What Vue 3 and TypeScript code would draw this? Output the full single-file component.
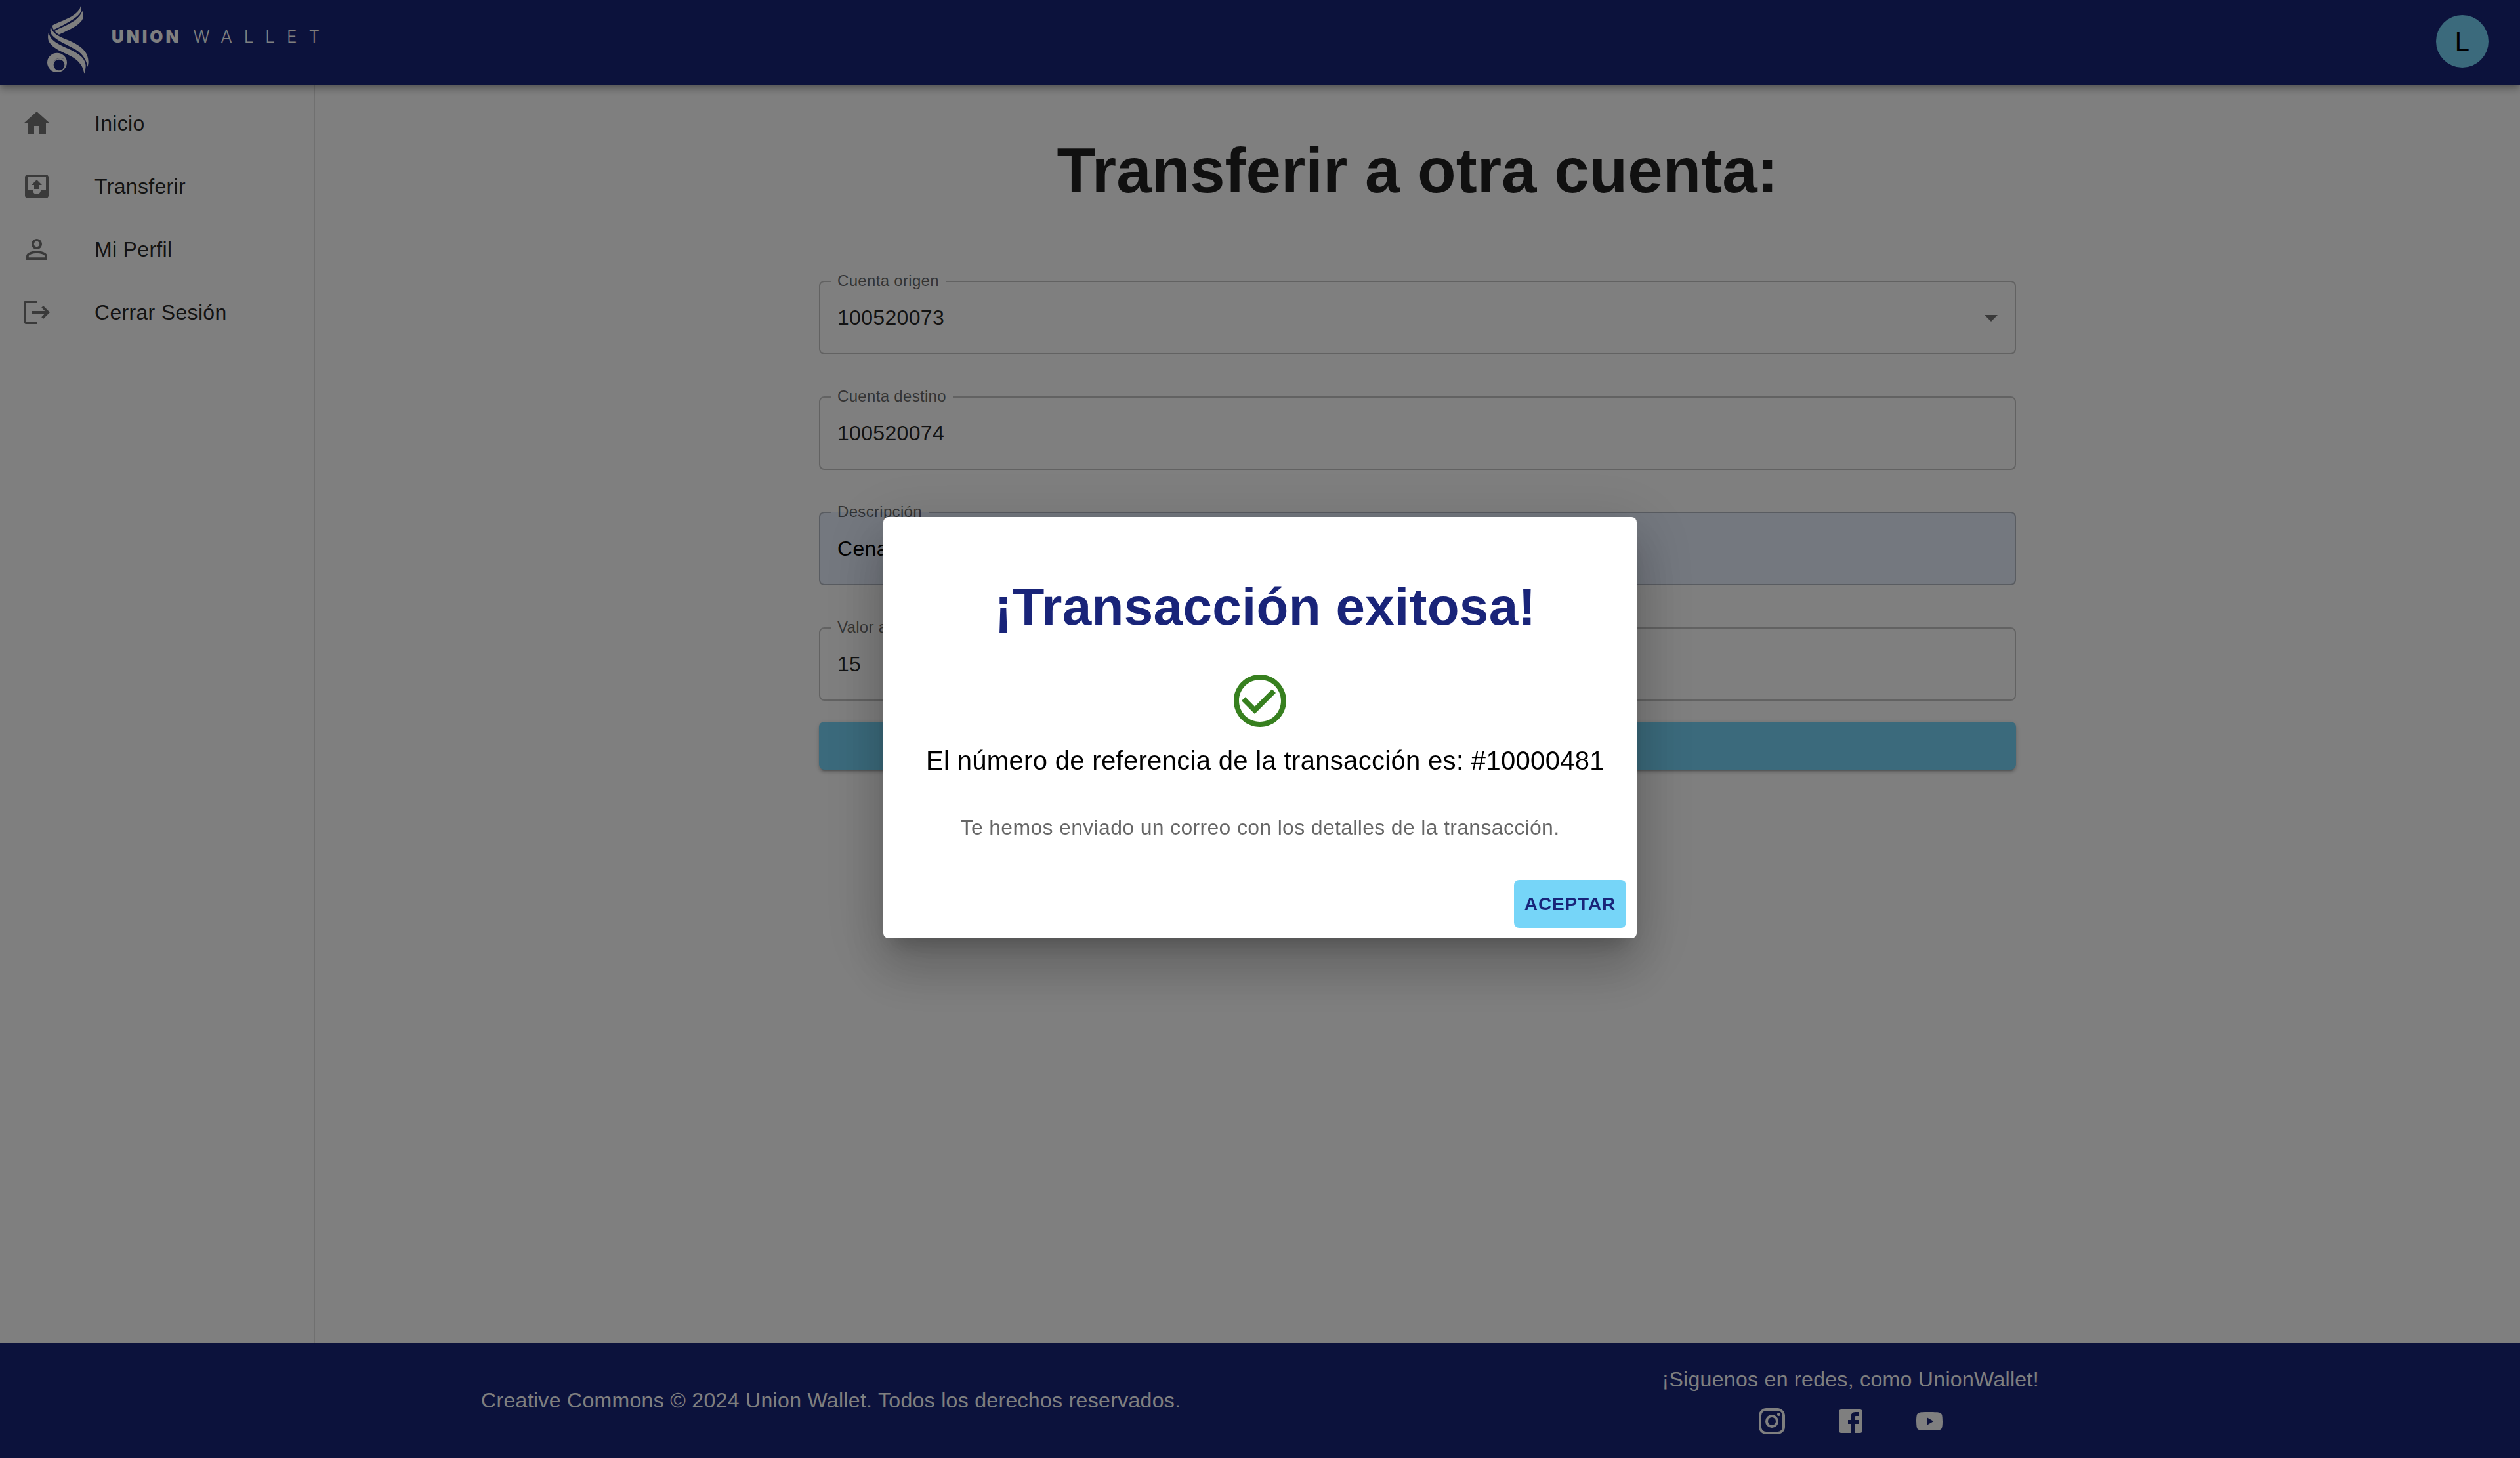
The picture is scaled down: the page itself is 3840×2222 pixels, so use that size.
<script setup lang="ts">
import { ref } from 'vue'

interface NavItem {
  label: string
  path: string
}

interface TextField {
  id: string
  label: string
  value: string
  filled: boolean
}

const navItems: NavItem[] = [
  { label: 'Inicio', path: 'M10 20v-6h4v6h5v-8h3L12 3 2 12h3v8z' },
  {
    label: 'Transferir',
    path: 'M19 3H5c-1.1 0-2 .9-2 2v14c0 1.1.9 2 2 2h14c1.1 0 2-.9 2-2V5c0-1.1-.9-2-2-2zm0 12h-4c0 1.66-1.35 3-3 3s-3-1.34-3-3H5V5h14v10zM8 11h2v3h4v-3h2l-4-4z',
  },
  {
    label: 'Mi Perfil',
    path: 'M12 5.9c1.16 0 2.1.94 2.1 2.1s-.94 2.1-2.1 2.1S9.9 9.16 9.9 8s.94-2.1 2.1-2.1m0 9c2.97 0 6.1 1.46 6.1 2.1v1.1H5.9V17c0-.64 3.13-2.1 6.1-2.1M12 4C9.79 4 8 5.79 8 8s1.79 4 4 4 4-1.79 4-4-1.79-4-4-4zm0 9c-2.67 0-8 1.34-8 4v3h16v-3c0-2.66-5.33-4-8-4z',
  },
  {
    label: 'Cerrar Sesión',
    path: 'M12 5V3H4c-1.1 0-2 .9-2 2v14c0 1.1.9 2 2 2h8v-2H4V5zM17 7l-1.41 1.41L18.17 11H8v2h10.17l-2.58 2.58L17 17l5-5z',
  },
]

const socialLinks: NavItem[] = [
  {
    label: 'Instagram',
    path: 'M7.8 2h8.4C19.4 2 22 4.6 22 7.8v8.4a5.8 5.8 0 0 1-5.8 5.8H7.8C4.6 22 2 19.4 2 16.2V7.8A5.8 5.8 0 0 1 7.8 2m-.2 2A3.6 3.6 0 0 0 4 7.6v8.8C4 18.39 5.61 20 7.6 20h8.8a3.6 3.6 0 0 0 3.6-3.6V7.6C20 5.61 18.39 4 16.4 4H7.6m9.65 1.5a1.25 1.25 0 1 1 0 2.5 1.25 1.25 0 0 1 0-2.5M12 7a5 5 0 1 1 0 10 5 5 0 0 1 0-10m0 2a3 3 0 1 0 0 6 3 3 0 0 0 0-6z',
  },
  {
    label: 'Facebook',
    path: 'M5 3h14a2 2 0 0 1 2 2v14a2 2 0 0 1-2 2h-4v-7h3v-3h-3V9a1 1 0 0 1 1-1h2V5h-2.5A3.5 3.5 0 0 0 12 8.5V11h-2v3h2v7H5a2 2 0 0 1-2-2V5a2 2 0 0 1 2-2z',
  },
  {
    label: 'YouTube',
    path: 'M10 15l5.19-3L10 9v6m11.56-7.83c.13.47.22 1.1.28 1.9.07.8.1 1.49.1 2.09L22 12c0 2.19-.16 3.8-.44 4.83-.25.9-.83 1.48-1.73 1.73-.47.13-1.33.22-2.65.28-1.3.07-2.49.1-3.59.1L12 19c-4.19 0-6.8-.16-7.83-.44-.9-.25-1.48-.83-1.73-1.73-.13-.47-.22-1.1-.28-1.9-.07-.8-.1-1.49-.1-2.09L2 12c0-2.19.16-3.8.44-4.83.25-.9.83-1.48 1.73-1.73.47-.13 1.33-.22 2.65-.28 1.3-.07 2.49-.1 3.59-.1L12 5c4.19 0 6.8.16 7.83.44.9.25 1.48.83 1.73 1.73z',
  },
]

const accounts = ['100520073']
const origin = ref(accounts[0])
const fields = ref<TextField[]>([
  { id: 'destino', label: 'Cuenta destino', value: '100520074', filled: false },
  { id: 'descripcion', label: 'Descripción', value: 'Cena', filled: true },
  { id: 'valor', label: 'Valor a transferir', value: '15', filled: false },
])
const dialogOpen = ref(true)
</script>

<template>
  <div class="page">
    <header class="topbar">
      <a class="brand" href="#">
        <svg class="brand-mark" viewBox="0 0 228 342" aria-hidden="true">
          <path d="M42 104C78 84 164 62 170 16c6 14 4 26-4 34C146 76 100 98 48 124c-5-6-6-12-6-20z" />
          <path d="M52 129C98 104 160 88 178 38c6 14 6 24 3 34-11 30-61 52-109 74-8-5-16-9-20-17z" />
          <path d="M34 110c4 16 14 29 32 40 38 24 140 42 140 120 0 10-2 18-4 24-4-32-22-58-52-78-34-22-90-40-112-70-8-12-7-24-4-36z" />
          <path d="M25 136c3 24 19 40 45 54 42 24 122 44 124 98 0 14-4 28-7 38-3-34-27-64-63-82-40-20-90-38-101-72-3-14-2-26 2-36z" />
          <path fill-rule="evenodd" d="M63 230a45 44 0 1 0 0 88a45 44 0 1 0 0-88zM72 260a25 25 0 1 1 0 50a25 25 0 1 1 0-50z" />
          <path class="brand-arc" d="M48 270c8-14 34-24 50-8" />
        </svg>
        <span class="brand-name"><b>UNION</b> <span>WALLET</span></span>
      </a>
      <button class="avatar" type="button" aria-label="Cuenta">L</button>
    </header>

    <div class="body">
      <nav class="sidebar">
        <a v-for="item in navItems" :key="item.label" class="nav-item" href="#">
          <svg class="icon" viewBox="0 0 24 24" aria-hidden="true"><path :d="item.path" /></svg>
          <span>{{ item.label }}</span>
        </a>
      </nav>

      <main class="main">
        <h1>Transferir a otra cuenta:</h1>
        <form class="form" @submit.prevent>
          <fieldset class="field">
            <legend><label for="origen">Cuenta origen</label></legend>
            <div class="select">
              <select id="origen" v-model="origin">
                <option v-for="account in accounts" :key="account">{{ account }}</option>
              </select>
              <svg class="icon caret" viewBox="0 0 24 24" aria-hidden="true"><path d="M7 10l5 5 5-5z" /></svg>
            </div>
          </fieldset>
          <fieldset v-for="field in fields" :key="field.id" class="field" :class="{ filled: field.filled }">
            <legend><label :for="field.id">{{ field.label }}</label></legend>
            <input :id="field.id" v-model="field.value" type="text" />
          </fieldset>
          <button class="submit" type="submit" aria-label="Transferir"></button>
        </form>
      </main>
    </div>

    <footer class="footer">
      <p>Creative Commons © 2024 Union Wallet. Todos los derechos reservados.</p>
      <div class="social">
        <p>¡Siguenos en redes, como UnionWallet!</p>
        <div class="social-links">
          <a v-for="link in socialLinks" :key="link.label" href="#" :aria-label="link.label">
            <svg class="icon" viewBox="0 0 24 24" aria-hidden="true"><path :d="link.path" /></svg>
          </a>
        </div>
      </div>
    </footer>

    <div v-if="dialogOpen" class="backdrop">
      <section class="dialog" role="dialog" aria-modal="true" aria-labelledby="dialog-title">
        <h2 id="dialog-title">¡Transacción exitosa!</h2>
        <svg class="check" viewBox="0 0 24 24" aria-hidden="true">
          <path d="M16.59 7.58L10 14.17l-3.59-3.58L5 12l5 5 8-8zM12 2C6.48 2 2 6.48 2 12s4.48 10 10 10 10-4.48 10-10S17.52 2 12 2zm0 18c-4.42 0-8-3.58-8-8s3.58-8 8-8 8 3.58 8 8-3.58 8-8 8z" />
        </svg>
        <p class="reference">El número de referencia de la transacción es: #10000481</p>
        <p class="note">Te hemos enviado un correo con los detalles de la transacción.</p>
        <button class="accept" type="button" @click="dialogOpen = false">ACEPTAR</button>
      </section>
    </div>
  </div>
</template>

<style>
body {
  margin: 0;
  background: #fff;
}
</style>

<style scoped>
.page {
  --navy: #192479;
  --sky: #76d5f8;
  min-height: 100vh;
  display: flex;
  flex-direction: column;
  color: rgba(0, 0, 0, 0.87);
  font-family: 'Liberation Sans', Helvetica, Arial, sans-serif;
  font-size: 32px;
  line-height: 48px;
  letter-spacing: 0.01em;
}

.page * {
  box-sizing: border-box;
}

h1,
h2,
p {
  margin: 0;
}

button,
input,
select {
  border: 0;
  margin: 0;
  font: inherit;
  letter-spacing: inherit;
  color: inherit;
  background: none;
}

a {
  color: inherit;
  text-decoration: none;
}

.icon {
  display: block;
  width: 48px;
  height: 48px;
  fill: currentColor;
}

.topbar {
  position: relative;
  display: flex;
  align-items: flex-start;
  justify-content: space-between;
  height: 129px;
  padding: 0 48px 0 66px;
  background: var(--navy);
  box-shadow:
    0 4px 8px -2px rgba(0, 0, 0, 0.2),
    0 8px 10px 0 rgba(0, 0, 0, 0.14),
    0 2px 20px 0 rgba(0, 0, 0, 0.12);
}

.brand {
  display: flex;
  gap: 28px;
  padding-top: 4px;
  color: #fff;
}

.brand-mark {
  width: 76px;
  height: 114px;
  fill: currentColor;
}

.brand-arc {
  fill: none;
  stroke: var(--navy);
  stroke-width: 1;
}

.brand-name {
  display: flex;
  gap: 18px;
  padding-top: 28px;
  font-family: Inter, Lato, sans-serif;
  font-size: 26px;
  line-height: 48px;
}

.brand-name b {
  font-weight: 900;
  letter-spacing: 4px;
}

.brand-name span {
  font-weight: 300;
  letter-spacing: 18px;
}

.avatar {
  width: 80px;
  height: 80px;
  margin-top: 23px;
  padding: 0;
  border-radius: 50%;
  background: var(--sky);
  color: #000;
  font-size: 40px;
}

.body {
  flex: 1;
  display: flex;
}

.sidebar {
  flex: 0 0 480px;
  padding-top: 11px;
  border-right: 2px solid rgba(0, 0, 0, 0.12);
}

.nav-item {
  display: flex;
  align-items: center;
  gap: 64px;
  height: 96px;
  padding: 0 32px;
}

.nav-item .icon {
  color: rgba(0, 0, 0, 0.54);
}

.main {
  flex: 1;
  padding: 75px 48px;
}

h1 {
  font-size: 96px;
  line-height: 112px;
  letter-spacing: 0;
  text-align: center;
}

.form {
  display: flex;
  flex-direction: column;
  gap: 52px;
  max-width: 1824px;
  margin: 100px auto 0;
}

.field {
  min-width: 0;
  margin: 0;
  padding: 0;
  border: 2px solid rgba(0, 0, 0, 0.23);
  border-radius: 8px;
}

.field.filled {
  background: #e8f0fe;
  color: #000;
}

legend {
  margin-left: 16px;
  padding: 0 10px 2px;
  color: rgba(0, 0, 0, 0.6);
  font-size: 24px;
  line-height: 24px;
}

label {
  display: block;
}

.field input,
.field select {
  display: block;
  width: 100%;
  height: 96px;
  padding: 0 26px 12px;
  appearance: none;
  outline: 0;
}

.select {
  display: grid;
}

.select > * {
  grid-area: 1 / 1;
}

.caret {
  justify-self: end;
  margin: 18px 12px 0 0;
  color: rgba(0, 0, 0, 0.54);
  pointer-events: none;
}

.submit,
.accept {
  min-height: 73px;
  padding: 12px 16px;
  border-radius: 8px;
  background: var(--sky);
  color: var(--navy);
  font-size: 28px;
  font-weight: 700;
  line-height: 49px;
  letter-spacing: 0.03em;
}

.submit {
  margin-top: -20px;
  box-shadow:
    0 6px 2px -4px rgba(0, 0, 0, 0.2),
    0 4px 4px 0 rgba(0, 0, 0, 0.14),
    0 2px 10px 0 rgba(0, 0, 0, 0.12);
}

.footer {
  display: flex;
  align-items: center;
  justify-content: space-evenly;
  height: 176px;
  background: var(--navy);
  color: #fff;
}

.social {
  display: flex;
  flex-direction: column;
  align-items: center;
  gap: 16px;
}

.social-links {
  display: flex;
  gap: 72px;
}

.backdrop {
  position: fixed;
  inset: 0;
  display: flex;
  align-items: center;
  justify-content: center;
  padding-bottom: 4px;
  background: rgba(0, 0, 0, 0.5);
}

.dialog {
  display: flex;
  flex-direction: column;
  align-items: center;
  width: 1148px;
  padding: 89px 16px 16px;
  border-radius: 8px;
  background: #fff;
  box-shadow:
    0 22px 30px -14px rgba(0, 0, 0, 0.2),
    0 48px 76px 6px rgba(0, 0, 0, 0.14),
    0 18px 92px 16px rgba(0, 0, 0, 0.12);
}

h2 {
  padding-left: 16px;
  color: var(--navy);
  font-size: 80px;
  line-height: 96px;
}

.check {
  width: 96px;
  height: 96px;
  margin-top: 47px;
  fill: #37801f;
}

.reference {
  margin-top: 11px;
  padding-left: 16px;
  color: #000;
  font-size: 40px;
  line-height: 64px;
}

.note {
  margin-top: 46px;
  color: rgba(0, 0, 0, 0.6);
}

.accept {
  align-self: flex-end;
  margin-top: 56px;
}
</style>
